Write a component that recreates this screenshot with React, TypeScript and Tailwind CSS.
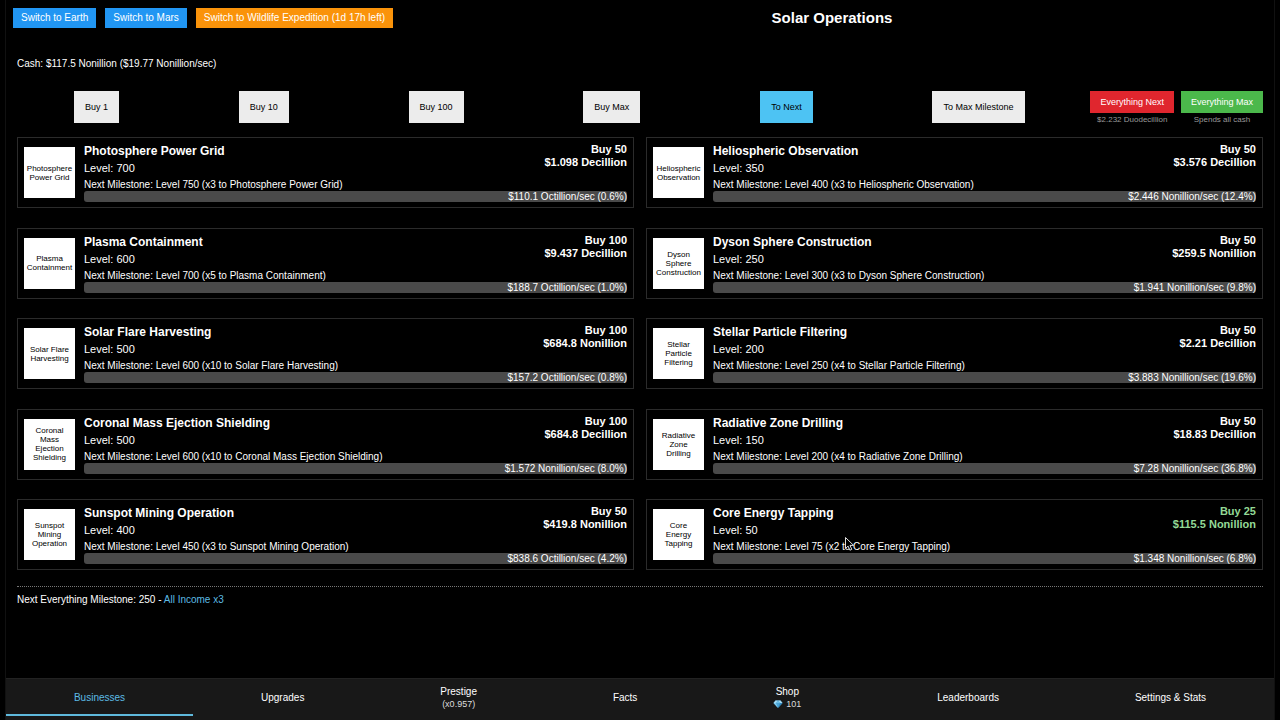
import { useState } from "react";
import clsx from "clsx";

type Business = {
  name: string;
  level: number;
  next: number;
  multiplier: string;
  amount: number;
  price: string;
  rate: string;
  affordable?: boolean;
};

const businesses: Business[] = [
  { name: "Photosphere Power Grid", level: 700, next: 750, multiplier: "x3", amount: 50, price: "$1.098 Decillion", rate: "$110.1 Octillion/sec (0.6%)" },
  { name: "Heliospheric Observation", level: 350, next: 400, multiplier: "x3", amount: 50, price: "$3.576 Decillion", rate: "$2.446 Nonillion/sec (12.4%)" },
  { name: "Plasma Containment", level: 600, next: 700, multiplier: "x5", amount: 100, price: "$9.437 Decillion", rate: "$188.7 Octillion/sec (1.0%)" },
  { name: "Dyson Sphere Construction", level: 250, next: 300, multiplier: "x3", amount: 50, price: "$259.5 Nonillion", rate: "$1.941 Nonillion/sec (9.8%)" },
  { name: "Solar Flare Harvesting", level: 500, next: 600, multiplier: "x10", amount: 100, price: "$684.8 Nonillion", rate: "$157.2 Octillion/sec (0.8%)" },
  { name: "Stellar Particle Filtering", level: 200, next: 250, multiplier: "x4", amount: 50, price: "$2.21 Decillion", rate: "$3.883 Nonillion/sec (19.6%)" },
  { name: "Coronal Mass Ejection Shielding", level: 500, next: 600, multiplier: "x10", amount: 100, price: "$684.8 Decillion", rate: "$1.572 Nonillion/sec (8.0%)" },
  { name: "Radiative Zone Drilling", level: 150, next: 200, multiplier: "x4", amount: 50, price: "$18.83 Decillion", rate: "$7.28 Nonillion/sec (36.8%)" },
  { name: "Sunspot Mining Operation", level: 400, next: 450, multiplier: "x3", amount: 50, price: "$419.8 Nonillion", rate: "$838.6 Octillion/sec (4.2%)" },
  { name: "Core Energy Tapping", level: 50, next: 75, multiplier: "x2", amount: 25, price: "$115.5 Nonillion", rate: "$1.348 Nonillion/sec (6.8%)", affordable: true },
];

const buyModes = ["Buy 1", "Buy 10", "Buy 100", "Buy Max", "To Next", "To Max Milestone"];

const tabs = [
  { label: "Businesses" },
  { label: "Upgrades" },
  { label: "Prestige", sub: "(x0.957)" },
  { label: "Facts" },
  { label: "Shop", sub: "101", gem: true },
  { label: "Leaderboards" },
  { label: "Settings & Stats" },
];

function Gem() {
  return (
    <svg className="w-[10px] h-[10px]" viewBox="0 0 20 20" aria-hidden="true">
      <path d="M5 3h10l4 5-9 10L1 8z" fill="#4aa3d6" />
      <path d="M5 3L1 8h5l4-5zM15 3l4 5h-5l-4-5z" fill="#a5daf2" />
      <path d="M10 3L6 8h8z" fill="#6cc0e8" />
      <path d="M1 8h5l4 10z" fill="#7fcbee" />
      <path d="M19 8h-5l-4 10z" fill="#2f86bd" />
    </svg>
  );
}

function Pointer() {
  return (
    <svg
      className="absolute left-[844px] top-[536px] w-[11px] h-[16px] pointer-events-none"
      viewBox="0 0 11 16"
      aria-hidden="true"
    >
      <path
        d="M1.5 1.5v11l2.6-2.4 1.8 4.1 1.9-.8-1.8-4h3.6z"
        fill="#000"
        stroke="#ddd"
        strokeWidth="1"
        strokeLinejoin="round"
      />
    </svg>
  );
}

function BusinessCard({ item }: { item: Business }) {
  return (
    <article className="flex items-center gap-[9px] border border-[#2b2b2b] px-[6px] py-[5px]">
      <div className="flex size-[51px] shrink-0 items-center justify-center bg-white px-1 text-center text-[8px] leading-[9px] text-black">
        {item.name}
      </div>
      <div className="min-w-0 flex-1">
        <div className="flex justify-between">
          <div>
            <h2 className="text-[12px] leading-[17px] font-bold">{item.name}</h2>
            <p className="text-[11px] leading-[17px]">Level: {item.level}</p>
          </div>
          <button
            className={clsx(
              "self-start text-right text-[11px] leading-[13px] font-bold",
              item.affordable ? "text-[#93d996]" : "text-white"
            )}
          >
            Buy {item.amount}
            <br />
            {item.price}
          </button>
        </div>
        <p className="text-[10px] leading-[16px]">
          Next Milestone: Level {item.next} ({item.multiplier} to {item.name})
        </p>
        <div className="-mt-[2px] rounded-[3px] bg-[#4a4a4a] text-right text-[10px] leading-[11px]">
          {item.rate}
        </div>
      </div>
    </article>
  );
}

export default function App() {
  const [mode, setMode] = useState("To Next");
  const [tab, setTab] = useState("Businesses");

  return (
    <div className="relative min-h-screen bg-black px-[5px] font-['Liberation_Sans',Arial,sans-serif] text-[10px] text-white">
      <div className="flex min-h-screen flex-col border-x border-[#111]">
        <header className="flex items-center gap-[9px] pt-2 pl-[7px] pr-3 leading-[12px]">
          <button className="bg-[#2196f3] px-2 py-1">Switch to Earth</button>
          <button className="bg-[#2196f3] px-2 py-1">Switch to Mars</button>
          <button className="bg-[#fa930a] px-2 py-1">
            Switch to Wildlife Expedition (1d 17h left)
          </button>
          <h1 className="flex-1 text-center text-[15px] leading-[20px] font-bold">
            Solar Operations
          </h1>
        </header>

        <main className="flex flex-1 flex-col px-[11px] pt-[30px] pb-[72px]">
          <p className="leading-[12px]">Cash: $117.5 Nonillion ($19.77 Nonillion/sec)</p>

          <div className="mt-[21px] flex items-start text-[9px]">
            <div className="-ml-[3px] flex flex-1 justify-around pr-[6px]">
              {buyModes.map((m) => (
                <button
                  key={m}
                  onClick={() => setMode(m)}
                  className={clsx(
                    "px-[11px] py-[10px] leading-[12px] text-black",
                    m === mode ? "bg-[#4dc3f3]" : "bg-[#ececec]"
                  )}
                >
                  {m}
                </button>
              ))}
            </div>
            <div className="flex gap-[7px] text-center">
              <div>
                <button className="bg-[#e0262e] px-[10px] py-[5px] leading-[12px]">
                  Everything Next
                </button>
                <p className="text-[8px] leading-[13px] text-[#999]">$2.232 Duodecillion</p>
              </div>
              <div>
                <button className="bg-[#4bb84b] px-[10px] py-[5px] leading-[12px]">
                  Everything Max
                </button>
                <p className="text-[8px] leading-[13px] text-[#999]">Spends all cash</p>
              </div>
            </div>
          </div>

          <section className="mt-[11px] grid flex-1 grid-cols-2 content-between gap-x-3">
            {businesses.map((item) => (
              <BusinessCard key={item.name} item={item} />
            ))}
          </section>

          <p className="mt-4 border-t border-dotted border-[#777] pt-[6px] leading-[13px]">
            Next Everything Milestone: 250 - <span className="text-[#5cbbe4]">All Income x3</span>
          </p>
        </main>

        <nav className="flex border-t border-[#222] bg-[#181818] pb-1">
          {tabs.map(({ label, sub, gem }) => (
            <button
              key={label}
              onClick={() => setTab(label)}
              className={clsx(
                "flex h-[37px] flex-auto flex-col items-center justify-center border-b-2 pt-[2px] leading-[13px]",
                label === tab ? "border-[#5fb9dc] text-[#5cbbe4]" : "border-transparent"
              )}
            >
              {label}
              {sub && (
                <span className="flex items-center gap-[3px] text-[9px] leading-[12px] text-[#ddd]">
                  {gem && <Gem />}
                  {sub}
                </span>
              )}
            </button>
          ))}
        </nav>
      </div>
      <Pointer />
    </div>
  );
}
